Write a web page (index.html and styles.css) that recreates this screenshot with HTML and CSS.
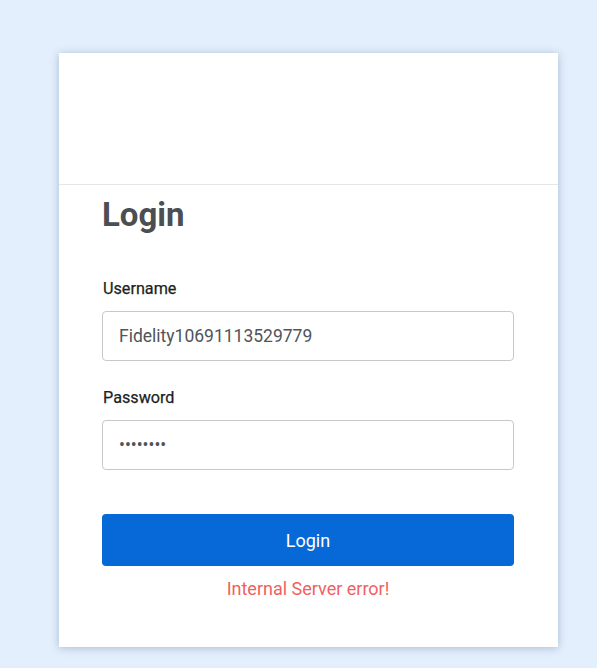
FILE: index.html
```html
<!DOCTYPE html>
<html lang="en">
<head>
<meta charset="utf-8">
<title>Login</title>
<link rel="stylesheet" href="styles.css">
</head>
<body>
<div class="card">
  <div class="card-header"></div>
  <form class="card-body">
    <h1 class="title">Login</h1>
    <label class="label" for="username">Username</label>
    <input class="field" id="username" type="text" value="Fidelity10691113529779">
    <label class="label label-second" for="password">Password</label>
    <input class="field" id="password" type="password" value="abcdefgh">
    <button class="btn" type="button">Login</button>
    <p class="error">Internal Server error!</p>
  </form>
</div>
</body>
</html>
```
FILE: styles.css
```css
html, body {
  margin: 0;
  padding: 0;
}
body {
  background: #e3effd;
  font-family: Roboto, "Liberation Sans", Arial, sans-serif;
  min-height: 668px;
  padding-top: 53px;
  box-sizing: border-box;
}
.card {
  margin-left: 59px;
  width: 499px;
  height: 594px;
  background: #ffffff;
  box-shadow: 0 1px 8px rgba(60, 90, 130, 0.35);
  display: flex;
  flex-direction: column;
}
.card-header {
  height: 131px;
  border-bottom: 1px solid #e6e6e6;
}
.card-body {
  display: flex;
  flex-direction: column;
  padding: 10px 44px 0 43px;
  margin: 0;
}
.title {
  margin: 0;
  font-size: 33px;
  line-height: 40px;
  font-weight: 700;
  color: #4b4e52;
}
.label {
  display: block;
  margin-top: 44px;
  margin-bottom: -1px;
  padding-left: 1px;
  font-size: 16.2px;
  line-height: 20px;
  font-weight: 400;
  color: #1c1f23;
  -webkit-text-stroke: 0.25px #1c1f23;
}
.label-second {
  margin-top: 27px;
}
.field {
  margin-top: 13px;
  height: 50px;
  box-sizing: border-box;
  border: 1px solid #c8c8c8;
  border-radius: 4px;
  padding: 0 16px;
  font-family: inherit;
  font-size: 17.5px;
  color: #50555a;
  background: #fff;
  outline: none;
}
.btn {
  margin-top: 44px;
  height: 52px;
  border: none;
  border-radius: 4px;
  background: #0769d8;
  color: #ffffff;
  font-family: inherit;
  font-size: 18px;
  cursor: pointer;
}
.error {
  margin: 11px 0 0;
  text-align: center;
  font-size: 18px;
  line-height: 24px;
  color: #f25f5f;
}
```
